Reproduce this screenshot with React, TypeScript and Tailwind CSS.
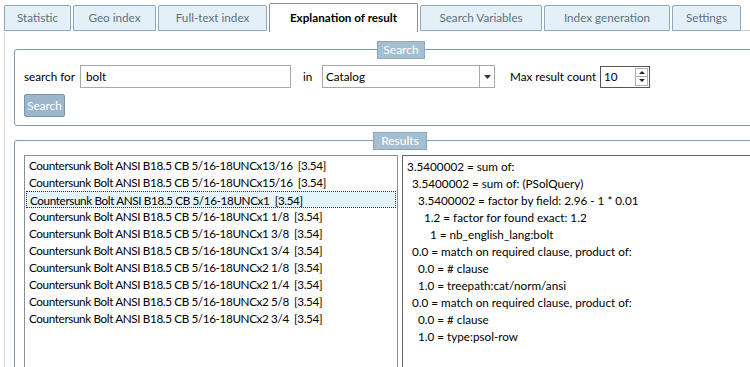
import React from "react";

const font = { fontFamily: 'Lato, "Noto Sans", sans-serif' };

const tabs: { label: string; w: string; ml: string; active?: boolean }[] = [
  { label: "Statistic", w: "w-[67px]", ml: "ml-0" },
  { label: "Geo index", w: "w-[83px]", ml: "ml-[2px]" },
  { label: "Full-text index", w: "w-[109px]", ml: "ml-[2px]" },
  { label: "Explanation of result", w: "w-[149px]", ml: "ml-[2px]", active: true },
  { label: "Search Variables", w: "w-[122px]", ml: "ml-[2px]" },
  { label: "Index generation", w: "w-[126px]", ml: "ml-[2px]" },
  { label: "Settings", w: "w-[69px]", ml: "ml-[2px]" },
];

const items = [
  "Countersunk Bolt ANSI B18.5 CB 5/16-18UNCx13/16  [3.54]",
  "Countersunk Bolt ANSI B18.5 CB 5/16-18UNCx15/16  [3.54]",
  "Countersunk Bolt ANSI B18.5 CB 5/16-18UNCx1  [3.54]",
  "Countersunk Bolt ANSI B18.5 CB 5/16-18UNCx1 1/8  [3.54]",
  "Countersunk Bolt ANSI B18.5 CB 5/16-18UNCx1 3/8  [3.54]",
  "Countersunk Bolt ANSI B18.5 CB 5/16-18UNCx1 3/4  [3.54]",
  "Countersunk Bolt ANSI B18.5 CB 5/16-18UNCx2 1/8  [3.54]",
  "Countersunk Bolt ANSI B18.5 CB 5/16-18UNCx2 1/4  [3.54]",
  "Countersunk Bolt ANSI B18.5 CB 5/16-18UNCx2 5/8  [3.54]",
  "Countersunk Bolt ANSI B18.5 CB 5/16-18UNCx2 3/4  [3.54]",
];

const explain: { t: string; pl: string }[] = [
  { t: "3.5400002 = sum of:", pl: "pl-0" },
  { t: "3.5400002 = sum of: (PSolQuery)", pl: "pl-[5px]" },
  { t: "3.5400002 = factor by field: 2.96 - 1 * 0.01", pl: "pl-[11px]" },
  { t: "1.2 = factor for found exact: 1.2", pl: "pl-[17px]" },
  { t: "1 = nb_english_lang:bolt", pl: "pl-[23px]" },
  { t: "0.0 = match on required clause, product of:", pl: "pl-[5px]" },
  { t: "0.0 = # clause", pl: "pl-[11px]" },
  { t: "1.0 = treepath:cat/norm/ansi", pl: "pl-[11px]" },
  { t: "0.0 = match on required clause, product of:", pl: "pl-[5px]" },
  { t: "0.0 = # clause", pl: "pl-[11px]" },
  { t: "1.0 = type:psol-row", pl: "pl-[11px]" },
];

function Legend({ text, pos }: { text: string; pos: string }) {
  return (
    <div
      className={`absolute top-[-9px] h-[18px] ${pos} bg-[#a5bfd2] border border-[#8aa7bd] text-white text-[12px] leading-[16px] flex items-center justify-center`}
    >
      {text}
    </div>
  );
}

export default function App() {
  return (
    <div className="w-[750px] h-[367px] overflow-hidden bg-white text-black text-[11.7px]" style={font}>
      {/* Tab strip */}
      <div className="flex items-end h-[32px] pl-[4px] relative">
        {tabs.map((t) =>
          t.active ? (
            <div
              key={t.label}
              className={`${t.w} ${t.ml} shrink-0 h-[29px] bg-white border border-b-0 border-[#8e8e8e] rounded-t-[2px] flex items-center justify-center font-bold text-[11.7px] relative z-10 whitespace-nowrap`}
            >
              {t.label}
            </div>
          ) : (
            <div
              key={t.label}
              className={`${t.w} ${t.ml} shrink-0 h-[26px] mb-[1px] bg-[#e4f0f8] border border-[#8ea8bd] rounded-t-[2px] flex items-center justify-center text-[#5f7080] text-[11.7px] whitespace-nowrap`}
            >
              {t.label}
            </div>
          )
        )}
        <div className="flex-1 h-[1px] bg-[#c8c8c8] mb-[1px]" />
      </div>

      {/* Content */}
      <div className="h-[335px] border-l border-[#d6d6d6] ml-[4px] pl-[9px] pt-[17px] w-[900px]">
        {/* Search group */}
        <div className="relative w-[772px] h-[77px] border border-[#7d9cb3] rounded-[3px] pl-[9px] pt-[15px]">
          <Legend text="Search" pos="left-[362px] w-[48px]" />
          <div className="flex items-center h-[23px] whitespace-nowrap">
            <span className="w-[56px] shrink-0">search for</span>
            <div className="w-[211px] shrink-0 h-[23px] border border-[#a8a8a8] flex items-center pl-[5px]">bolt</div>
            <span className="ml-[12px] w-[19px] shrink-0">in</span>
            <div className="w-[173px] shrink-0 h-[23px] border border-[#a8a8a8] flex items-center">
              <span className="flex-1 pl-[3px]">Catalog</span>
              <div className="w-[15px] h-full border-l border-[#a8a8a8] flex items-center justify-center">
                <svg width="7" height="4" viewBox="0 0 7 4">
                  <path d="M0 0 L7 0 L3.5 4 Z" fill="#333" />
                </svg>
              </div>
            </div>
            <span className="ml-[15px] w-[90px] shrink-0">Max result count</span>
            <div className="w-[50px] shrink-0 h-[22px] border border-[#555] flex items-center">
              <span className="flex-1 pl-[3px]">10</span>
              <div className="w-[13px] h-[18px] mr-[1px] border border-[#b0b0b0] flex flex-col">
                <div className="flex-1 flex items-center justify-center border-b border-[#b0b0b0]">
                  <svg width="6" height="3" viewBox="0 0 6 3">
                    <path d="M0 3 L6 3 L3 0 Z" fill="#222" />
                  </svg>
                </div>
                <div className="flex-1 flex items-center justify-center">
                  <svg width="6" height="3" viewBox="0 0 6 3">
                    <path d="M0 0 L6 0 L3 3 Z" fill="#222" />
                  </svg>
                </div>
              </div>
            </div>
          </div>
          <div className="mt-[6px] w-[41px] h-[23px] bg-[#9cb6cb] border border-[#7597b0] rounded-[2px] text-white flex items-center justify-center">
            Search
          </div>
        </div>

        {/* Results group */}
        <div className="relative mt-[14px] w-[772px] h-[260px] border border-[#7d9cb3] rounded-[3px] pl-[9px] pt-[14px] flex">
          <Legend text="Results" pos="left-[358px] w-[54px]" />
          <div className="w-[374px] shrink-0 h-[240px] border border-[#8a8f96] pt-[1px] px-[1px] tracking-[-0.37px]">
            {items.map((it, i) => (
              <div
                key={i}
                className={`h-[17px] leading-[17px] pl-[3px] whitespace-pre ${
                  i === 2 ? "bg-[#e5f3fb] border border-dotted border-[#333] leading-[15px] pl-[2px]" : ""
                }`}
              >
                {it}
              </div>
            ))}
          </div>
          <div className="ml-[4px] w-[400px] shrink-0 h-[240px] border border-[#666] pt-[2px] pl-[4px]">
            {explain.map((e, i) => (
              <div key={i} className={`h-[17px] leading-[17px] whitespace-pre ${e.pl}`}>
                {e.t}
              </div>
            ))}
          </div>
        </div>
      </div>
    </div>
  );
}
